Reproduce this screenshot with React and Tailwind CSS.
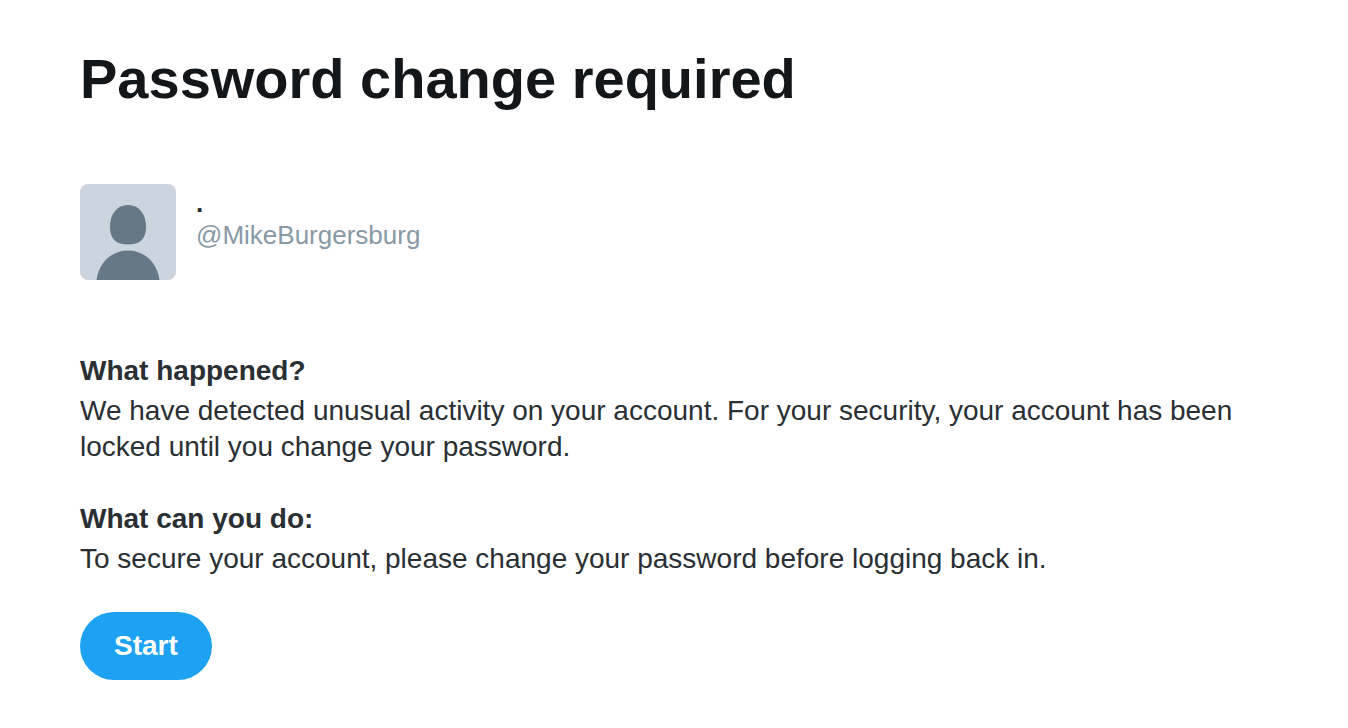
import React from 'react'

const account = {
  name: '.',
  handle: '@MikeBurgersburg',
}

function Avatar() {
  return (
    <svg viewBox="0 0 96 96" className="size-24 shrink-0 rounded-lg" role="img" aria-label="Profile picture">
      <rect width="96" height="96" fill="#ccd5de" />
      <path
        d="M48 21C59 21 66 30 66 43C66 55 60 60.500 48 60.500C36 60.500 30 55 30 43C30 30 37 21 48 21Z"
        fill="#667786"
      />
      <path d="M16.500 96C19 78 32 66.500 48 66.500C64 66.500 77 78 79.500 96Z" fill="#667786" />
    </svg>
  )
}

function Section({ title, children }) {
  return (
    <section className="text-[28px] leading-9">
      <h2 className="mb-1 font-bold">{title}</h2>
      <p>{children}</p>
    </section>
  )
}

function App() {
  return (
    <main className="min-h-screen bg-white px-20 pt-11 pb-12 font-['Liberation_Sans',Arial,sans-serif] text-[#292f33]">
      <h1 className="text-[56px] leading-[70px] font-bold text-[#14171a]">Password change required</h1>

      {/* Account */}
      <div className="mt-[70px] flex gap-5">
        <Avatar />
        <div className="pt-[3px] text-[26px] leading-8">
          <p className="font-bold">{account.name}</p>
          <p className="text-[#8899a6]">{account.handle}</p>
        </div>
      </div>

      <div className="mt-[73px] flex flex-col gap-9">
        <Section title="What happened?">
          We have detected unusual activity on your account. For your security, your account has been
          locked until you change your password.
        </Section>
        <Section title="What can you do:">
          To secure your account, please change your password before logging back in.
        </Section>
      </div>

      <button
        type="button"
        className="mt-[35px] h-[68px] cursor-pointer rounded-full bg-[#1da1f2] px-[34px] text-[28px] leading-9 font-bold text-white"
      >
        Start
      </button>
    </main>
  )
}

export default App
